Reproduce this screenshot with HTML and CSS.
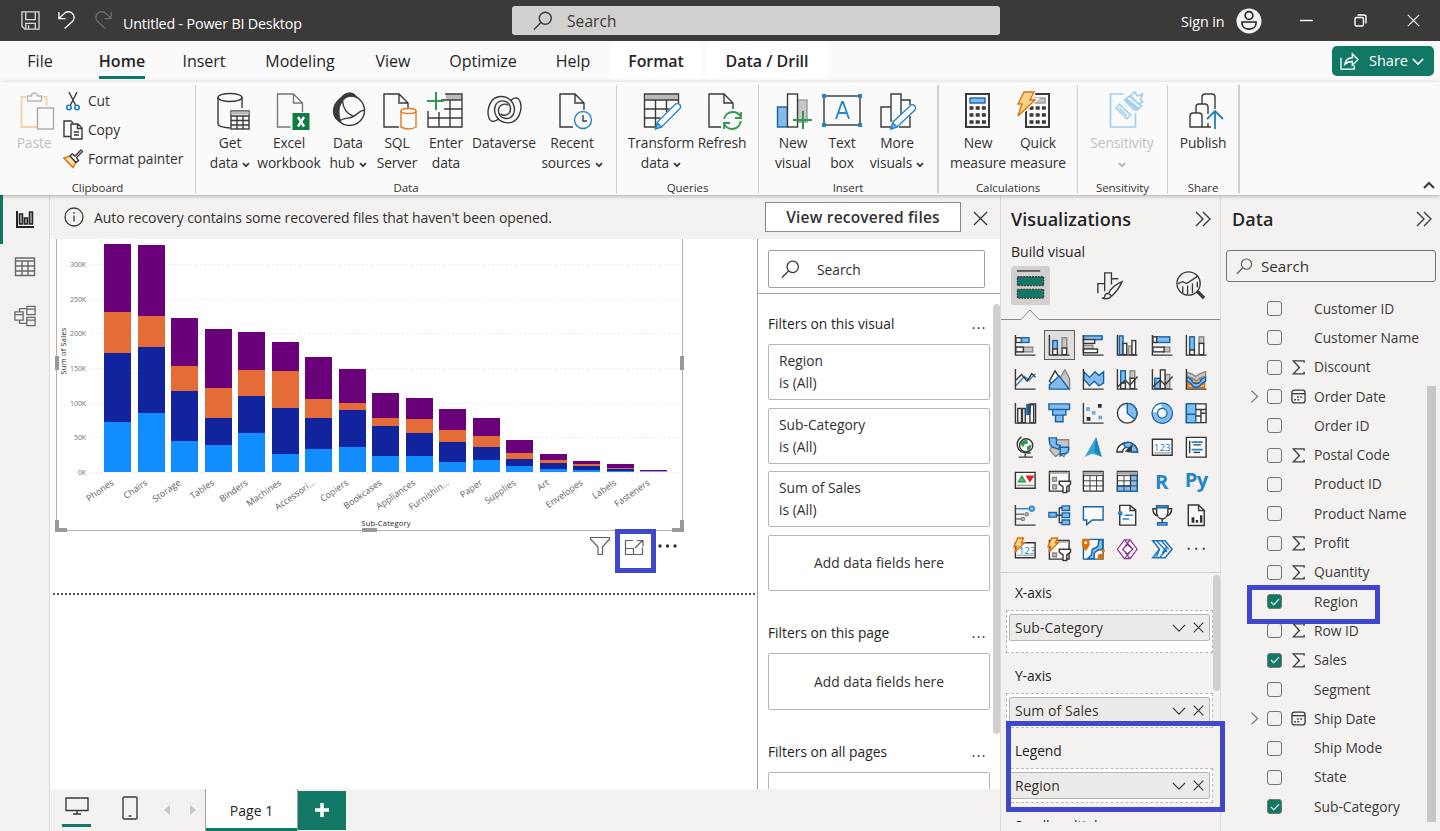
FILE: index.html
```html
<!DOCTYPE html>
<html lang="en">
<head>
<meta charset="utf-8">
<title>Untitled - Power BI Desktop</title>
<link rel="stylesheet" href="styles.css">
</head>
<body>
<svg class="defs" width="0" height="0">
  <symbol id="search" viewBox="0 0 20 20"><circle cx="12.3" cy="7.2" r="6"/><path d="M8 11.5L1 18.5"/></symbol>
  <symbol id="caret" viewBox="0 0 8 6"><path d="M1 1.2L4 4.2L7 1.2"/></symbol>
  <symbol id="sigma" viewBox="0 0 14 16"><path d="M13 3V1H1.5L8 8L1.5 14.8H13V12.6"/></symbol>
  <symbol id="cal" viewBox="0 0 16 16"><rect x="1" y="1.2" width="14" height="13.6" rx="2.5"/><path d="M1 5h14"/><path stroke-dasharray="1.8 1.6" d="M6.5 8.500h6M3.500 11.500h6" stroke-width="1.6"/></symbol>
  <symbol id="next" viewBox="0 0 10 16"><path d="M1.500 1.500L8.500 8L1.500 14.500"/></symbol>
  <symbol id="collapse" viewBox="0 0 16 16"><path d="M1 1L8 8L1 15M8 1L15 8L8 15"/></symbol>
  <symbol id="x" viewBox="0 0 16 16"><path d="M1 1L15 15M15 1L1 15"/></symbol>
  <symbol id="down" viewBox="0 0 16 9"><path d="M1 1L8 8L15 1"/></symbol>
</svg>

<header class="titlebar">
  <svg class="t-save" viewBox="0 0 20 20"><path d="M1 1h18v18H4l-3-3zM5 1v8h10V1M5 19v-6h10v6M8 15v4"/></svg>
  <svg class="t-undo" viewBox="0 0 20 20"><path d="M2 1v7h7M2 8L7.500 2.800a6 6 0 0 1 9 8L8 18.500"/></svg>
  <svg class="t-redo" viewBox="0 0 20 20"><path d="M18 1v7h-7M18 8L12.500 2.800a6 6 0 0 0-9 8L12 18.500"/></svg>
  <span class="doc-title">Untitled - Power BI Desktop</span>
  <div class="global-search"><svg><use href="#search"/></svg><span>Search</span></div>
  <span class="signin">Sign in</span>
  <svg class="avatar" viewBox="0 0 26 26"><circle cx="13" cy="13" r="12.500" fill="#f3f2f1" stroke="none"/><circle cx="13" cy="7.500" r="3.900"/><path d="M6 14h14v1.500c0 7.500-14 7.500-14 0z"/></svg>
  <svg class="win-min" viewBox="0 0 13 13"><path d="M0 6.500h13"/></svg>
  <svg class="win-max" viewBox="0 0 13 13"><rect x="1" y="3.500" width="8.500" height="8.500" rx="1.500"/><path d="M3.500 1h6.500q2 0 2 2v6.500"/></svg>
  <svg class="win-close" viewBox="0 0 16 16"><use href="#x"/></svg>
</header>

<nav class="tabs">
  <span class="tab file">File</span><span class="tab home"><b>Home</b></span><span class="tab insert">Insert</span><span class="tab modeling">Modeling</span><span class="tab view">View</span><span class="tab optimize">Optimize</span><span class="tab help">Help</span>
  <span class="tab ctx format">Format</span><span class="tab ctx drill">Data / Drill</span>
  <span class="share"><svg class="share-i" viewBox="0 0 20 18"><path d="M1 5v12h14v-4M5 12c1-5 4-7 8-7V1l6 6-6 6V9C9 9 7 10 5 12z"/></svg>Share<svg class="share-c" viewBox="0 0 16 9"><use href="#down"/></svg></span>
</nav>

<section class="ribbon">
  <div class="group g-clip">
    <div class="items">
      <div class="btn disabled w52"><svg viewBox="-3.500 0 36 38"><path d="M7 5H2v30h16M23 5h4v9" stroke="#f5d3a8" stroke-width="2"/><path d="M8 9V4h4q0-3 3-3t3 3h4v5z" stroke="#b8b8b8"/><rect x="18" y="16" width="16" height="21" stroke="#a8a8a8" stroke-width="1.400"/></svg><span>Paste</span></div>
      <div class="rows">
        <div><svg viewBox="0 0 20 20"><path d="M6 1l6.500 13M14 1L7.500 14"/><g stroke="#1a7dc4" stroke-width="1.600"><circle cx="6" cy="16.500" r="2.200"/><circle cx="14" cy="16.500" r="2.200"/></g></svg><span>Cut</span></div>
        <div><svg viewBox="0 0 20 20"><path d="M8 16.500H1V1h7l2 2M8 4h7l4 4v11H8zM14.500 4v4.500H19M11 12h5M11 15h5"/></svg><span>Copy</span></div>
        <div><svg viewBox="0 0 20 20"><path d="M1 9l6-2 6 6-3 5.500z" stroke="#d9730d" fill="#fde0a8" stroke-width="1.500"/><path d="M7 7l2-2 3 2 6-6 1.500 1.500-6 6 2 3-2.500 2z" fill="#fafafa"/></svg><span>Format painter</span></div>
      </div>
    </div>
    <div class="glabel">Clipboard</div>
  </div>

  <div class="group g-data">
    <div class="items">
      <div class="btn w56"><svg viewBox="-4 0 36 38"><path d="M2 5v27q0 3 12 4M26 5v11"/><ellipse cx="14" cy="5.500" rx="12" ry="4"/><rect x="15" y="19" width="18" height="18" fill="#fafafa"/><path d="M15 21h18" stroke="#bbb" stroke-width="3"/><path d="M15 24h18M15 28.500h18M15 33h18M21 24v13M27 24v13"/></svg><span>Get</span><span>data<svg class="car"><use href="#caret"/></svg></span></div>
      <div class="btn w62"><svg viewBox="-1.500 0 36 38"><path d="M18 35H5V2h16l9 9v9M21 2v9h9" stroke="#777"/><rect x="20" y="21" width="17" height="17" fill="#107c41" stroke="none"/><path d="M25.500 25l6 9.500M31.500 25l-6 9.500" stroke="#fff" stroke-width="2.400"/></svg><span>Excel</span><span>workbook</span></div>
      <div class="btn w56"><svg viewBox="0 0 36 38"><circle cx="19.500" cy="18.500" r="15"/><path d="M10 7C3 11-1 25 11 30.500 8 22 8 14 13 9z" fill="#3b3a39" stroke-width="1"/><path d="M10 7C15-1 24-1 27.500 6 22 3 16 4 12.500 9z" fill="#3b3a39" stroke-width="1"/><path d="M12.500 8.500C13 16 17 22 23.500 24.300M34.500 18.500C30 17 27 24 21 25.500 17 26.500 13 26 9.500 29"/></svg><span>Data</span><span>hub<svg class="car"><use href="#caret"/></svg></span></div>
      <div class="btn w42"><svg viewBox="-1 0 36 38"><path d="M19 35H4V2h15l9 9v5M19 2v9h9"/><g stroke="#e07a1a" fill="#fff"><path d="M21 19v16q8 4 15 0V19"/><ellipse cx="28.500" cy="19" rx="7.500" ry="2.500"/></g></svg><span>SQL</span><span>Server</span></div>
      <div class="btn w56"><svg viewBox="1 0 36 38"><path d="M19 5h16" stroke="#bbb" stroke-width="5"/><path d="M18 2h17v33H1V19M14 8h21M17 17h18M1 26h34M12 20v15M23 8v27"/><path d="M9 0v18M0 9h17" stroke="#2f9a4f" stroke-width="2"/></svg><span>Enter</span><span>data</span></div>
      <div class="btn w60"><svg viewBox="0 0 36 38"><g id="swirl"><path d="M13 26.500c-2 2-4 3-6 3C-1 29 0 4.500 15 4.500c11 0 16 11 12 18.500-4 6-14 4-14.500-4-.3-6 6-8.500 10-5.500"/></g><use href="#swirl" transform="rotate(180 18.500 17.700)"/></svg><span>Dataverse</span></div>
      <div class="btn w76"><svg viewBox="-1 0 36 38"><path d="M18 35H5V2h15l9 9v7M20 2v9h9"/><circle cx="28" cy="28" r="8.500" stroke="#2585c9"/><path d="M28 23v6h4"/></svg><span>Recent</span><span>sources<svg class="car"><use href="#caret"/></svg></span></div>
    </div>
    <div class="glabel">Data</div>
  </div>

  <div class="group g-query">
    <div class="items">
      <div class="btn w70"><svg viewBox="-.5 0 36 38"><path d="M2 5h32" stroke="#bbb" stroke-width="5"/><path d="M13 35H1V2h34v10M1 8h34M1 17h25M1 26h16M12 8v27M23 8v12"/><path d="M12 37l2-7 18-18q3-1 4.500 1t-.5 4L18 35z" stroke="#2585c9" fill="#fff"/><path d="M12 37l2-6 4 4z" fill="#83bceb" stroke="#2585c9"/></svg><span>Transform</span><span>data<svg class="car"><use href="#caret"/></svg></span></div>
      <div class="btn w52b"><svg viewBox="-1 0 36 38"><path d="M16 35H4V2h15l9 9v6M19 2v9h9"/><path d="M19 27q2-7 9-7 5 0 8 5M36 20v6h-6M36 29q-2 8-9 8-5 0-8-5M19 37v-6h6" stroke="#2f9a4f" stroke-width="1.800"/></svg><span>Refresh</span></div>
    </div>
    <div class="glabel">Queries</div>
  </div>

  <div class="group g-insert">
    <div class="items">
      <div class="btn w46"><svg viewBox="0 0 36 38"><rect x="2.500" y="15" width="10" height="20" fill="#83bceb" stroke="#1664a8"/><rect x="22" y="8" width="10" height="22" fill="#c8c6c4" stroke="#999"/><rect x="12.500" y="2" width="10" height="33" fill="#fff"/><path d="M28 19v18M18 28h19" stroke="#2f9a4f" stroke-width="2"/></svg><span>New</span><span>visual</span></div>
      <div class="btn w52b"><svg viewBox="0 0 36 38"><rect x="0" y="4" width="36" height="29"/><g fill="#2585c9" stroke="none"><path d="M-2 2h4v4h-4zM34 2h4v4h-4zM-2 31h4v4h-4zM34 31h4v4h-4z"/></g><path d="M12 27l6-17h1l6 17M14 21h9" stroke="#2585c9" stroke-width="1.800"/></svg><span>Text</span><span>box</span></div>
      <div class="btn w58"><svg viewBox="0 0 36 38"><path d="M13 35H2V15h10M12 30V2h10v21M22 8h9v5M20 35h11V24"/><path d="M12 37l2-7 18-17q3-1 4 1t0 4L18 35z" stroke="#2585c9" fill="#fff"/><path d="M12 37l2-6 4 4z" fill="#83bceb" stroke="#2585c9"/></svg><span>More</span><span>visuals<svg class="car"><use href="#caret"/></svg></span></div>
    </div>
    <div class="glabel">Insert</div>
  </div>

  <div class="group g-calc">
    <div class="items">
      <div class="btn w60"><svg viewBox="0 0 36 38"><rect x="6" y="2" width="23" height="33" stroke-width="2"/><rect x="10" y="6" width="15" height="5" fill="#83bceb" stroke="#1664a8"/><path d="M9.500 16h17M9.500 23h17M9.500 30h17" stroke-dasharray="4 2.200" stroke-width="3.600"/></svg><span>New</span><span>measure</span></div>
      <div class="btn w60"><svg viewBox="0 0 36 38"><rect x="6" y="2" width="23" height="33" stroke-width="2"/><rect x="10" y="6" width="15" height="5" fill="#c8c6c4" stroke="#999"/><path d="M9.500 16h17M9.500 23h17M9.500 30h17" stroke-dasharray="4 2.200" stroke-width="3.600"/><path d="M4 0h10l-4 8h5L-2 24l4-12h-4z" fill="#fbd38a" stroke="#fafafa" stroke-width="4"/><path d="M4 0h10l-4 8h5L-2 24l4-12h-4z" fill="#fbd38a" stroke="#d9730d"/></svg><span>Quick</span><span>measure</span></div>
    </div>
    <div class="glabel">Calculations</div>
  </div>

  <div class="group g-sens">
    <div class="items"><div class="btn disabled w88"><svg viewBox="-1.500 0 36 38"><g stroke="#a3cfec" stroke-width="1.700"><path d="M18 2H5v33h25V21"/><path d="M10.500 16l3.500-3.500 11 10.500-3.500 3.500zM13.500 16l8 7.500"/><path d="M19 8l5-4 12 10-4 4h-3z" fill="#fafafa"/><path d="M20.500 7.500l12 9.500" stroke-width="3.500"/><path d="M25 4l4-4 3 4 5-2-2 5 2 3-4 2z" fill="#fafafa"/></g></svg><span>Sensitivity</span><span><svg class="car solo"><use href="#caret"/></svg></span></div></div>
    <div class="glabel">Sensitivity</div>
  </div>
  <div class="group g-share">
    <div class="items"><div class="btn w70"><svg viewBox="-4 0 36 38"><path d="M22 35H1V24q0-3 3-3h6q3 0 3 3v11M7 21v-6q0-3 3-3h6q3 0 3 3v7M19 31v4M13 12V5q0-3 3-3h7q3 0 3 3v12"/><path d="M26 37V19M18 27l8-8 8 8" stroke="#2080b8" stroke-width="1.800"/></svg><span>Publish</span></div></div>
    <div class="glabel">Share</div>
  </div>
  <svg class="ribbon-up" viewBox="0 0 12 8"><path d="M1 7L6 2L11 7"/></svg>
</section>

<main class="body">
  <aside class="rail">
    <div class="rail-item on"><svg viewBox="0 0 22 22"><path d="M3 2v16h17" stroke-width="2"/><path d="M5.500 5h3v10h-3zM10.500 9h3v6h-3zM15.500 3h3v12h-3z" fill="#aaa" stroke-width="1.500"/></svg></div>
    <div class="rail-item tbl"><svg viewBox="0 0 22 22"><path d="M1.500 2h19v17.500h-19zM1.500 5h19M1.500 10h19M1.500 15h19M8 5v14M14 5v14"/></svg></div>
    <div class="rail-item mdl"><svg viewBox="0 0 24 24"><path d="M1 7.500h9v9H1zM1 10.500h9M14 1.500h9v9h-9zM14 4.500h9M14 13.500h9v9h-9zM14 16.500h9M6 7.500V4h8M6 16.500V20h8"/></svg></div>
  </aside>

  <section class="center">
    <div class="notice">
      <svg class="info" viewBox="0 0 20 20"><circle cx="10" cy="10" r="9"/><path d="M10 8.500v6M10 5v1.800"/></svg>
      <span>Auto recovery contains some recovered files that haven't been opened.</span>
      <button>View recovered files</button>
      <svg class="close"><use href="#x"/></svg>
    </div>
    <div class="workspace">
      <div class="canvas">
        <svg class="chart" viewBox="50 239 707 550">
          <g class="grid"><path d="M92 264.500H680M92 299.500H680M92 333.500H680M92 368.500H680M92 403.500H680M92 437.500H680M92 472.500H680"/></g>
          <g class="ticks"><text x="86" y="267">300K</text><text x="86" y="302">250K</text><text x="86" y="336">200K</text><text x="86" y="371">150K</text><text x="86" y="405.500">100K</text><text x="86" y="440">50K</text><text x="86" y="475">0K</text></g>
          <g class="bars">
            <path stroke="#6b007b" d="M117.700 244V472M151.200 245V472M184.700 317.500V472M218.200 329V472M251.700 331.500V472M285.200 341.500V472M318.700 356.500V472M352.200 369V472M385.700 393V472M419.200 398V472M452.700 409V472M486.200 418V472M519.700 440V472M553.200 453.500V472M586.700 461V472M620.200 463.500V472M653.700 470V472"/>
            <path stroke="#e66c37" d="M117.700 312V472M151.200 315.500V472M184.700 366V472M218.200 387.500V472M251.700 370V472M285.200 370.500V472M318.700 398.500V472M352.200 403V472M385.700 417.500V472M419.200 418.500V472M452.700 429.500V472M486.200 436V472M519.700 452.500V472M553.200 460V472M586.700 464V472M620.200 467.500V472"/>
            <path stroke="#12239e" d="M117.700 352.500V472M151.200 347V472M184.700 391V472M218.200 418V472M251.700 396V472M285.200 408V472M318.700 418V472M352.200 410V472M385.700 425.500V472M419.200 432.500V472M452.700 442V472M486.200 446.500V472M519.700 458.500V472M553.200 463V472M586.700 466V472M620.200 469V472"/>
            <path stroke="#118dff" d="M117.700 422V472M151.200 413V472M184.700 440.500V472M218.200 445V472M251.700 433V472M285.200 454V472M318.700 449V472M352.200 446.500V472M385.700 455.500V472M419.200 456V472M452.700 461.500V472M486.200 460V472M519.700 466V472M553.200 468.500V472M586.700 469.500V472M620.200 470.500V472"/>
            <path stroke="#8f9fe8" d="M653.700 471V472"/>
          </g>
          <g class="cats">
            <text transform="translate(114.500 484) rotate(-35)">Phones</text><text transform="translate(148 484) rotate(-35)">Chairs</text><text transform="translate(181.500 484) rotate(-35)">Storage</text><text transform="translate(215 484) rotate(-35)">Tables</text><text transform="translate(248.500 484) rotate(-35)">Binders</text><text transform="translate(282 484) rotate(-35)">Machines</text><text transform="translate(315.500 484) rotate(-35)">Accessori...</text><text transform="translate(349 484) rotate(-35)">Copiers</text><text transform="translate(382.500 484) rotate(-35)">Bookcases</text><text transform="translate(416 484) rotate(-35)">Appliances</text><text transform="translate(449.500 484) rotate(-35)">Furnishin...</text><text transform="translate(483 484) rotate(-35)">Paper</text><text transform="translate(516.500 484) rotate(-35)">Supplies</text><text transform="translate(550 484) rotate(-35)">Art</text><text transform="translate(583.500 484) rotate(-35)">Envelopes</text><text transform="translate(617 484) rotate(-35)">Labels</text><text transform="translate(650.500 484) rotate(-35)">Fasteners</text>
          </g>
          <g class="titles"><text x="386" y="526">Sub-Category</text><text transform="translate(66 351) rotate(-90)">Sum of Sales</text></g>
          <path class="frame" d="M56.500 239V530.500H682.500V239"/>
          <g fill="#999" stroke="none"><path d="M55 356h4v14h-4zM680 356h4v14h-4zM362 528h15v4h-15zM55 520h4v8h8v4H55zM680 520h4v12H672v-4h8z"/></g>
          <g class="vicons"><path d="M590.500 537.500h19v1.500l-7 8v7.500h-4.500V547l-7.500-8z"/><path d="M633 540.500h-7.500v14h17v-7M625.500 548.500h8v6M635 548l7.500-7.500M637 540.500h6v6"/></g>
          <g fill="#333" stroke="none"><circle cx="660" cy="546" r="1.700"/><circle cx="667.500" cy="546" r="1.700"/><circle cx="675" cy="546" r="1.700"/></g>
          <path class="page-edge" d="M53 594H757"/>
        </svg>
      </div>
      <div class="filters">
        <div class="filter-search"><svg><use href="#search"/></svg><span>Search</span></div>
        <div class="filter-list">
          <h4>Filters on this visual<i>...</i></h4>
          <div class="card"><span>Region</span><span>is (All)</span></div>
          <div class="card"><span>Sub-Category</span><span>is (All)</span></div>
          <div class="card"><span>Sum of Sales</span><span>is (All)</span></div>
          <div class="card add">Add data fields here</div>
          <h4 class="second">Filters on this page<i>...</i></h4>
          <div class="card add">Add data fields here</div>
          <h4 class="third">Filters on all pages<i>...</i></h4>
          <div class="card add"></div>
          <div class="thumb"></div>
        </div>
      </div>
    </div>
    <footer class="pages">
      <div class="desk"><svg viewBox="0 0 24 20"><path d="M1 2h22v12.500H1zM12 14.500V18M8 18h8"/></svg></div>
      <svg class="phone" viewBox="0 0 16 24"><rect x="1" y="1" width="14" height="22" rx="1"/><path d="M6.500 20h3"/></svg>
      <svg class="arrow" viewBox="0 0 6 10"><path d="M6 0v10L0 5z"/></svg>
      <svg class="arrow r" viewBox="0 0 6 10"><path d="M0 0v10l6-5z"/></svg>
      <div class="page-tab">Page 1</div>
      <div class="page-add"><svg viewBox="0 0 14 14"><path d="M7 0v14M0 7h14"/></svg></div>
    </footer>
  </section>

  <aside class="viz">
    <div class="pane-head"><h2>Visualizations</h2><svg><use href="#collapse"/></svg></div>
    <h3>Build visual</h3>
    <div class="modes">
      <div class="mode on"><svg viewBox="0 0 32 32"><path d="M2 2h24" stroke-width="1.500"/><rect x="2.500" y="8" width="27" height="9" fill="#117865" stroke-dasharray="2 1"/><rect x="2.500" y="21" width="27" height="9" fill="#117865" stroke-dasharray="2 1"/></svg></div>
      <div class="mode"><svg viewBox="0 0 32 32"><path d="M3 24V14h7M10 22V3h7v12M17 9h7M28 12q-10 4-14 12l3 3q7-6 11-15zM14 24q-4 0-4 4-1 1-3 1 7 2 10-2"/></svg></div>
      <div class="mode"><svg viewBox="0 0 32 32"><circle cx="14" cy="14" r="12"/><path d="M3 14l5-2 4 2 12-8M8 17v7M13 16v9M18 14v10M23 12v6"/><path d="M23 22l7 7" stroke-width="3.500"/></svg></div>
    </div>
    <svg class="notch" viewBox="0 0 219 12"><path d="M0 11.500H20L29 2L38 11.500H219"/></svg>
    <div class="gallery">
      <svg viewBox="0 0 24 24"><rect class="g" x="2" y="14" width="18" height="5"/><rect class="w" x="2" y="14" width="8" height="5"/><rect class="w" x="2" y="4" width="6" height="5"/><rect class="b" x="8" y="4" width="8" height="5"/><path d="M1.500 1v21.500H23"/></svg>
      <svg class="sel" viewBox="0 0 24 24"><rect class="b" x="5" y="7" width="5" height="9"/><rect class="w" x="5" y="16" width="5" height="6"/><rect class="g" x="15" y="4" width="5" height="11"/><rect class="w" x="15" y="15" width="5" height="7"/><path d="M1.500 1v21.500H23"/></svg>
      <svg viewBox="0 0 24 24"><rect class="b" x="1.500" y="2" width="20" height="4"/><rect class="w" x="1.500" y="6" width="12" height="4"/><rect class="g" x="1.500" y="12" width="10" height="4"/><rect class="w" x="1.500" y="16" width="15" height="4"/><path d="M1.500 1v21.500H23"/></svg>
      <svg viewBox="0 0 24 24"><rect class="b" x="3.500" y="2" width="4" height="20"/><rect class="w" x="7.500" y="10" width="4" height="12"/><rect class="g" x="13" y="13" width="4" height="9"/><rect class="w" x="17" y="7" width="4" height="15"/><path d="M1.500 1v21.500H23"/></svg>
      <svg viewBox="0 0 24 24"><rect class="b" x="5" y="3" width="15" height="6"/><rect class="w" x="2" y="3" width="4" height="6"/><rect class="g" x="13" y="14" width="7" height="5"/><rect class="w" x="2" y="14" width="12" height="5"/><path d="M1.500 1v21.500H23"/></svg>
      <svg viewBox="0 0 24 24"><rect class="b" x="5" y="3" width="5" height="14"/><rect class="w" x="5" y="17" width="5" height="5"/><rect class="g" x="15" y="3" width="5" height="7"/><rect class="w" x="15" y="10" width="5" height="12"/><path d="M1.500 1v21.500H23"/></svg>

      <svg viewBox="0 0 24 24"><path d="M2 19l9-10 5 4 7-7" stroke="#2585c9"/><path d="M2 13l6-6 6 7 5-8 4 4M1.500 1v21.500H23"/></svg>
      <svg viewBox="0 0 24 24"><path class="g" d="M12 12l6-10 5 9v11H12z"/><path class="w" d="M1.500 14l6-11 7 11-5 8z"/><path class="b" d="M1.500 22.500V18L12 8.500l10.500 14z"/></svg>
      <svg viewBox="0 0 24 24"><path class="b" d="M2 4l6 6 6-6 4 4 5-4v12l-5 3-5-5-5 5-6-7z"/><path d="M1.500 1v21.500H23"/></svg>
      <svg viewBox="0 0 24 24"><rect class="b" x="5" y="3" width="5" height="13"/><rect class="w" x="5" y="16" width="5" height="6"/><rect class="g" x="15" y="3" width="5" height="8"/><rect class="w" x="15" y="11" width="5" height="11"/><path d="M1.500 1v21.500H23M2 20l8-7 5 5 8-9"/></svg>
      <svg viewBox="0 0 24 24"><rect class="b" x="4" y="11" width="6" height="11"/><rect class="g" x="15" y="7" width="5" height="15"/><rect class="w" x="10" y="2" width="5" height="20"/><path d="M1.500 1v21.500H23M2 20l8-7 5 5 8-9"/></svg>
      <svg viewBox="0 0 24 24"><path d="M3 12h18v4H3zM3 17h18v4H3z" fill="#f5b070" stroke="#d9730d"/><path class="g" d="M2 5q5 0 9 4 6-4 11-5v5q-5 0-10 5-4-4-10-5z"/><path class="b" d="M2 10q5 1 6 5 4 3 8 0 1-4 6-5v4q-4 2-6 5-4 3-8 0-2-4-6-5z"/><path d="M1.500 1v21.500H23"/></svg>

      <svg viewBox="0 0 24 24"><path class="w" d="M4 7h5v15H4zM8 7h4v15H8zM17 3h4v19h-4z"/><rect x="13" y="2" width="4" height="12" fill="#1664a8" stroke="none"/><path d="M1.500 1v21.500H23V2h-6v11"/></svg>
      <svg viewBox="0 0 24 24"><path class="b" d="M1 2h22v6H1zM5 8h14v6H5zM8 14h8v7H8z"/></svg>
      <svg viewBox="0 0 24 24"><path d="M1.500 1v21.500H23"/><path fill="#83bceb" stroke="#2585c9" stroke-width=".6" d="M5 6h3v3H5zM11 10h3v3h-3zM18 15h3v3h-3z"/><path fill="#333" d="M17 2h4v4h-4zM5 16h4v4H5z" stroke="none"/></svg>
      <svg viewBox="0 0 24 24"><circle class="w" cx="12" cy="12" r="10.500" stroke="#333"/><path class="b" d="M12 12V1.500a10.500 10.500 0 0 1 8 17z"/></svg>
      <svg viewBox="0 0 24 24"><circle cx="12" cy="12" r="8" stroke="#1664a8" stroke-width="7"/><circle cx="12" cy="12" r="8" stroke="#83bceb" stroke-width="4.500"/><path d="M4 11q1-6 7-7" stroke="#fff" stroke-width="4"/></svg>
      <svg viewBox="0 0 24 24"><path class="w" d="M1.500 2h21v20h-21z" stroke="#333"/><path class="b" d="M1.500 2h10v20h-10zM1.500 13h10"/><path d="M11.500 8h11M17 8v14M11.500 15h5.500M17 12h5"/></svg>

      <svg viewBox="0 0 24 24"><circle cx="13" cy="10" r="7" fill="#fff"/><path d="M8 5l6-1 1 4-4 1-1 3-3-3zM14 11l5-2-2 6-3 1z" fill="#2f9a4f" stroke="none"/><path d="M8 1q-6 4-4 11t14 6M12 19v3M5 22.500h15"/></svg>
      <svg viewBox="0 0 24 24"><path class="g" d="M9 4h13v9l-5 9-5-3-4 3-6-7 3-7z"/><path class="b" d="M1 2h8v7l4 1-2 4-6-2-3-3zM13 12h9q1 6-4 7h-3l-2 2z"/></svg>
      <svg viewBox="0 0 24 24"><path d="M15 1L3 22l8-3 10 3z" fill="#38a3d5" stroke="none"/><path d="M15 1l6 21-8-5z" fill="#1b86bd" stroke="none"/></svg>
      <svg viewBox="0 0 24 24"><path class="w" d="M1 17a11 10 0 0 1 22 0h-6a5 5 0 0 0-10 0z" stroke="#333"/><path class="b" d="M8 8.500C14 4 22 9 23 17h-6q-1-5-7-5z"/><path d="M11 16l6-6-2 7z" fill="#333"/></svg>
      <svg viewBox="0 0 24 24"><path class="w" d="M1.500 3.500h21v17h-21z" stroke="#333"/><path d="M3 18h18" stroke="#aaa"/><text x="12" y="15.500">123</text></svg>
      <svg viewBox="0 0 24 24"><path class="w" d="M1.500 1.500h21v21h-21z" stroke="#333"/><path d="M5 5v13M9 9.500h8M9 17.500h7"/><path d="M7 6.500h12M7 14.500h12" stroke="#2585c9" stroke-width="2"/></svg>

      <svg viewBox="0 0 24 24"><path class="w" d="M1.500 2.500h21v17h-21z" stroke="#333"/><path d="M5 12.500l3.500-6 3.500 6z" fill="#6fbf73" stroke="#2f9a4f"/><path d="M13.500 6.500h7l-3.500 5.500z" fill="#d22" stroke="#d22"/><path d="M3 16.500h18" stroke="#999"/></svg>
      <svg viewBox="0 0 24 24"><path class="w" d="M1.500 1.500h21v21h-21z" stroke="#333"/><path d="M1.500 3h21" stroke="#aaa" stroke-width="2"/><path class="g" d="M5 8h4v4H5zM5 16h4v4H5z"/><path d="M12 12h12v3l-4 3v6h-4v-6l-4-3z" fill="#fff"/></svg>
      <svg viewBox="0 0 24 24"><path class="w" d="M1.500 1.500h21v21h-21z" stroke="#333"/><path d="M1.500 3.500h21" stroke="#aaa" stroke-width="3"/><path d="M1.500 6h21M1.500 11.500h21M1.500 17h21M8.500 6v16M15.500 6v16" stroke-width="1"/></svg>
      <svg viewBox="0 0 24 24"><path class="w" d="M1.500 1.500h21v21h-21z" stroke="#333"/><path class="b" d="M15.500 5h7v17.500h-21V17h14z"/><path d="M1.500 3.500h21" stroke="#aaa" stroke-width="3"/><path d="M1.500 6h21M1.500 11.500h21M1.500 17h21M8.500 6v16M15.500 6v16" stroke-width="1"/></svg>
      <svg viewBox="0 0 24 24"><text class="big" x="11" y="20">R</text></svg>
      <svg viewBox="0 0 24 24"><text class="big" x="12" y="18">Py</text></svg>

      <svg viewBox="0 0 24 24"><path d="M1.500 1v21.500H23"/><path d="M2 5h16" stroke="#2585c9"/><circle cx="19" cy="5" r="2.600" fill="#83bceb" stroke="#2585c9"/><path d="M2 11h9M2 16h6" stroke="#777"/><circle cx="13.500" cy="11" r="1.700" class="g"/><circle cx="9.500" cy="16" r="1.700" class="g"/></svg>
      <svg viewBox="0 0 24 24"><path d="M8 12h7M12 4v16M12 4h3M12 20h3"/><path class="b" d="M1 9h8v5H1zM15 2h8v5h-8zM15 9.500h8v5h-8zM15 17h8v5h-8z"/></svg>
      <svg viewBox="0 0 24 24"><path class="w" stroke="#1664a8" d="M1.500 3h21v14H11l-6 5v-5H1.500z"/></svg>
      <svg viewBox="0 0 24 24"><path class="w" d="M4 1.500h11l6 5v16H4z" stroke="#333"/><path d="M15 1.500v5.500h6"/><path d="M9 12h9M7 16h7" stroke="#2585c9"/><circle cx="4.500" cy="10" r="2.500" fill="#2585c9" stroke="none"/></svg>
      <svg viewBox="0 0 24 24"><path class="w" d="M6 2h12v8q-2 6-6 6t-6-6zM6 5H2q0 7 6 8M18 5h4q0 7-6 8M12 16v4" stroke="#333"/><path class="b" d="M6 2h12v2H6zM7 20h10v2.500H7z"/></svg>
      <svg viewBox="0 0 24 24"><path class="w" d="M3.500 1h11l6 6v16h-17z" stroke="#333"/><path d="M14.500 1v6h6"/><path d="M7 14h3v6H7zM11.500 17h2.500v3h-2.500zM16 12h2.500v8H16z" fill="#333" stroke="none"/></svg>

      <svg viewBox="0 0 24 24"><path class="w" d="M1.500 5h21v16h-21z" stroke="#333"/><text x="14" y="17">123</text><path d="M3 18.500h18" stroke="#aaa"/><path d="M4 0h6L8 5h3L1 15l2-6H0z" fill="#fbd38a" stroke="#d9730d"/></svg>
      <svg viewBox="0 0 24 24"><path class="w" d="M1.500 2.500h21v20h-21z" stroke="#333"/><path d="M10 4h12" stroke="#aaa" stroke-width="2"/><path class="g" d="M5 16h4v4H5z"/><path d="M12 12h12v3l-4 3v6h-4v-6l-4-3z" fill="#fff"/><path d="M4 0h6L8 5h3L1 15l2-6H0z" fill="#fbd38a" stroke="#d9730d"/></svg>
      <svg viewBox="0 0 24 24"><path class="w" d="M1.500 1.500h21v21h-21z" stroke="#1664a8"/><path class="b" d="M22 2v10l-5 1-4 3v6H6l4-4 1-6 6-3 1-7z"/><path d="M0 1h8v7l-4 6-4-6z" fill="#e07000" stroke="none"/><circle cx="4" cy="5" r="1.600" fill="#fff" stroke="none"/><circle cx="20" cy="20" r="3.300" fill="#e07000" stroke="none"/><circle cx="22.500" cy="13.500" r="1.800" fill="#e07000" stroke="none"/></svg>
      <svg viewBox="0 0 24 24"><path stroke="#8b2f97" fill="#fff" d="M1.500 12L9 2h6l7.500 10L15 22H9z" stroke-width="1.300"/><path stroke="#8b2f97" stroke-width="1.300" d="M9 2l9 10-6 5-5-5 5-5 6 5M15 2L9.500 9M9 22l6-7M15 22l-5.500-7"/></svg>
      <svg viewBox="0 0 24 24"><path stroke="#1976c5" fill="#fff" stroke-width="1.700" d="M2 3h13l7.500 9-7.500 9H2l7-9z"/><path stroke="#1976c5" stroke-width="1.500" d="M6 3l11 12M11 3l8 9M17 12L9 21M9 12l-3 8M12 16l5-7"/></svg>
      <svg viewBox="0 0 24 24"><path d="M3 11.500h2M11 11.500h2M19 11.500h2" stroke-width="2"/></svg>
    </div>
    <div class="wells">
      <h5>X-axis</h5>
      <div class="well first"><div class="pill">Sub-Category<svg class="dn"><use href="#down"/></svg><svg class="cx"><use href="#x"/></svg></div></div>
      <h5 class="y">Y-axis</h5>
      <div class="well"><div class="pill">Sum of Sales<svg class="dn"><use href="#down"/></svg><svg class="cx"><use href="#x"/></svg></div></div>
      <h5 class="l">Legend</h5>
      <div class="well"><div class="pill">Region<svg class="dn"><use href="#down"/></svg><svg class="cx"><use href="#x"/></svg></div></div>
      <h5 class="s">Small multiples</h5>
      <div class="thumb"></div>
    </div>
  </aside>

  <aside class="data">
    <div class="pane-head"><h2>Data</h2><svg><use href="#collapse"/></svg></div>
    <div class="data-search"><svg><use href="#search"/></svg><span>Search</span></div>
    <ul class="fields">
      <li><em></em><i></i><b></b>Customer ID</li>
      <li><em></em><i></i><b></b>Customer Name</li>
      <li><em></em><i></i><b><svg><use href="#sigma"/></svg></b>Discount</li>
      <li><em><svg><use href="#next"/></svg></em><i></i><b><svg><use href="#cal"/></svg></b>Order Date</li>
      <li><em></em><i></i><b></b>Order ID</li>
      <li><em></em><i></i><b><svg><use href="#sigma"/></svg></b>Postal Code</li>
      <li><em></em><i></i><b></b>Product ID</li>
      <li><em></em><i></i><b></b>Product Name</li>
      <li><em></em><i></i><b><svg><use href="#sigma"/></svg></b>Profit</li>
      <li><em></em><i></i><b><svg><use href="#sigma"/></svg></b>Quantity</li>
      <li><em></em><i class="ck"><svg viewBox="0 0 12 10"><path d="M1 5l3.500 3.500L11 1.500"/></svg></i><b></b>Region</li>
      <li><em></em><i></i><b><svg><use href="#sigma"/></svg></b>Row ID</li>
      <li><em></em><i class="ck"><svg viewBox="0 0 12 10"><path d="M1 5l3.500 3.500L11 1.500"/></svg></i><b><svg><use href="#sigma"/></svg></b>Sales</li>
      <li><em></em><i></i><b></b>Segment</li>
      <li><em><svg><use href="#next"/></svg></em><i></i><b><svg><use href="#cal"/></svg></b>Ship Date</li>
      <li><em></em><i></i><b></b>Ship Mode</li>
      <li><em></em><i></i><b></b>State</li>
      <li><em></em><i class="ck"><svg viewBox="0 0 12 10"><path d="M1 5l3.500 3.500L11 1.500"/></svg></i><b></b>Sub-Category</li>
    </ul>
    <div class="thumb"></div>
  </aside>
</main>
<div class="mark mark-focus"></div>
<div class="mark mark-region"></div>
<div class="mark mark-legend"></div>
</body>
</html>
```
FILE: styles.css
```css
* { box-sizing: border-box; margin: 0; padding: 0; }
body { width: 1440px; height: 831px; overflow: hidden; position: relative; background: #f3f2f1; color: #323130; font: 14px/20px "Open Sans", "Noto Sans", sans-serif; }
svg { fill: none; stroke: #3b3a39; stroke-width: 1.4; flex: none; overflow: visible; }
.defs { position: absolute; }
h2, h3, h4, h5 { font-weight: 400; color: #252423; }

.titlebar { height: 41px; background: #3b3a39; color: #fff; display: flex; align-items: center; }
.titlebar svg { stroke: #fff; }
.titlebar .t-save { width: 19px; height: 19px; margin-left: 21px; stroke: #d8d8d8; }
.titlebar .t-undo { width: 19px; height: 19px; margin-left: 17px; }
.titlebar .t-redo { width: 19px; height: 19px; margin-left: 18px; stroke: #6e6d6c; }
.doc-title { margin-left: 10px; width: 389px; padding-top: 7px; white-space: nowrap; font-size: 14.300px; letter-spacing: -.17px; }
.titlebar .global-search { width: 488px; height: 29px; background: #d2d0ce; border-radius: 3px; color: #3b3a39; font-size: 15.500px; letter-spacing: .1px; display: flex; align-items: center; padding-left: 21px; }
.global-search svg { width: 20px; height: 20px; stroke: #3b3a39; margin-right: 14px; }
.titlebar .global-search svg { stroke: #3b3a39; }
.signin { width: 46px; margin-left: 181px; white-space: nowrap; font-size: 14.300px; letter-spacing: -.1px; padding-top: 2px; }
.titlebar .avatar { width: 26px; height: 26px; margin-left: 9px; stroke: #252423; stroke-width: 1.6; }
.win-min { width: 13px; height: 13px; margin-left: 38px; }
.win-max { width: 13px; height: 13px; margin-left: 41px; }
.win-close { width: 13px; height: 13px; margin-left: 40px; }

.tabs { height: 41px; background: #fafafa; display: flex; font-size: 16px; line-height: 22px; color: #252423; }
.tab { display: flex; justify-content: center; padding-top: 9px; height: 38px; letter-spacing: 0; }
.tab b { font-weight: 600; border-bottom: 3px solid #117865; height: 29px; letter-spacing: .05px; }
.file { width: 80px; } .home { width: 84px; } .insert { width: 80px; } .modeling { width: 112px; } .view { width: 74px; } .optimize { width: 106px; } .help { width: 74px; }
.ctx { background: #fff; font-weight: 600; letter-spacing: -.1px; }
.drill { letter-spacing: -.02px; }
.format { width: 92px; } .drill { width: 122px; margin-left: 4px; }
.share { margin: 5px 0 0 504px; width: 102px; height: 30px; background: #117865; border-radius: 5px; color: #fff; display: flex; align-items: center; font-size: 14.500px; padding-left: 8px; letter-spacing: 0; }
.share svg { stroke: #fff; }
.share .share-i { width: 19px; height: 17px; margin-right: 10px; }
.share .share-c { width: 12px; height: 7px; margin-left: 4px; stroke-width: 2; }

.ribbon { height: 113px; background: #fafafa; display: flex; position: relative; z-index: 2; box-shadow: 0 1px 4px rgba(0,0,0,.3); padding-top: 3px; }
.group { height: 108px; border-right: 1px solid #d0cfce; display: flex; flex-direction: column; }
.items { display: flex; height: 93px; }
.btn { display: flex; flex-direction: column; align-items: center; padding-top: 7px; font-size: 13.800px; letter-spacing: -.1px; white-space: nowrap; }
.btn > svg { width: 36px; height: 38px; margin-bottom: 3px; }
.btn span { height: 20px; }
.btn.disabled { color: #c2c0be; }
.car { width: 8px; height: 6px; margin-left: 4px; stroke-width: 1.8; }
.car.solo { margin: 0; stroke: #b3b0ad; }
.w42 { width: 42px; } .w46 { width: 46px; } .w52, .w52b { width: 52px; } .w56 { width: 56px; } .w58 { width: 58px; } .w60 { width: 60px; } .w62 { width: 62px; } .w70 { width: 70px; } .w76 { width: 76px; } .w88 { width: 88px; }
.glabel { text-align: center; font-size: 11.500px; line-height: 16px; letter-spacing: -.05px; margin-top: 2px; position: relative; top: 3px; }
.g-clip { width: 196px; } .g-clip .items { padding-left: 8px; }
.g-data { width: 421px; } .g-data .items { padding-left: 6px; }
.g-query { width: 142px; } .g-query .items { padding-left: 9px; }
.g-insert { width: 180px; border-right-width: 2px; } .g-insert .items { padding-left: 11px; }
.g-calc { width: 139px; } .g-calc .items { padding-left: 9px; }
.g-sens { width: 90px; }
.g-share { width: 72px; border-right-width: 2px; }
.rows { padding: 1px 0 0 3px; }
.rows div { display: flex; align-items: center; height: 29px; font-size: 13.800px; letter-spacing: -.08px; white-space: nowrap; }
.rows svg { width: 20px; height: 20px; margin-right: 5px; }
.ribbon-up { width: 12px; height: 8px; margin: 96px 0 0 183px; stroke-width: 2; }

.body { display: flex; height: 636px; }
.rail { width: 50px; border-right: 1px solid #dcdbda; }
.rail-item { height: 49px; display: flex; align-items: center; padding-left: 14px; }
.rail-item.on { border-left: 3px solid #117865; padding-left: 11px; }
.rail-item.tbl { height: 46px; }
.rail-item.mdl { height: 52px; }
.rail-item svg { width: 22px; height: 22px; stroke: #696867; }
.rail-item.on svg { stroke: #252423; }
.center { width: 951px; border-right: 1px solid #dcdbda; display: flex; flex-direction: column; }
.notice { height: 44px; display: flex; align-items: center; white-space: nowrap; font-size: 14px; letter-spacing: -.085px; }
.info { width: 20px; height: 20px; margin: 0 10px 0 14px; stroke-width: 1.3; }
.notice span { width: 671px; padding-top: 2px; }
.notice button { width: 196px; height: 30px; background: #fff; border: 1px solid #8a8886; font: 600 15.500px "Open Sans", sans-serif; color: #323130; letter-spacing: .2px; }
.close { width: 15px; height: 15px; margin: 2px 0 0 12px; }
.workspace { height: 550px; display: flex; background: #fff; overflow: hidden; }
.canvas { width: 707px; }
.chart { width: 707px; height: 550px; display: block; }
.chart text { stroke: none; fill: #666; font-family: "Open Sans", sans-serif; }
.grid path { stroke: #e3e3e3; stroke-width: 1; stroke-dasharray: 1.500 3; }
.chart .ticks text { font-size: 7.200px; text-anchor: end; fill: #777; letter-spacing: -.2px; }
.bars path { stroke-width: 27; shape-rendering: crispEdges; }
.chart .cats text { font-size: 9px; text-anchor: end; fill: #605e5c; }
.chart .titles text { font-size: 7.500px; letter-spacing: .2px; text-anchor: middle; fill: #252423; }
.frame { stroke: #b3b3b3; stroke-width: 1; }
.vicons path { stroke: #605e5c; stroke-width: 1.2; }
.page-edge { stroke: #555; stroke-width: 2; stroke-dasharray: 2 2; }

.filters { width: 243px; border-left: 1px solid #a3a1a0; font-size: 13.800px; }
.filter-search { height: 38px; width: 217px; margin: 11px 0 5px 10px; border: 1px solid #a19f9d; border-radius: 2px; display: flex; align-items: center; padding-left: 12px; }
.filter-search svg { width: 19px; height: 19px; margin-right: 17px; }
.filter-search span { padding-top: 1px; }
.filter-list { border-top: 1px solid #a3a1a0; padding: 20px 10px 0; position: relative; height: 496px; letter-spacing: 0; }
.filter-list h4 { font-size: 13.800px; display: flex; justify-content: space-between; padding-right: 3px; height: 30px; line-height: 20px; }
.filter-list h4 i { font-style: normal; letter-spacing: 1.500px; }
.filter-list h4.second { margin-top: 32px; }
.filter-list h4.third { margin-top: 32px; }
.card { height: 56px; width: 222px; border: 1px solid #b8b6b5; border-radius: 2px; padding: 5px 10px; display: flex; flex-direction: column; line-height: 22px; }
.card + .card { margin-top: 7.600px; }
.card.add { align-items: center; justify-content: center; padding-top: 6px; letter-spacing: .05px; }
.second + .card { height: 57px; }
.thumb { background: #d2d0ce; border-radius: 4px; position: absolute; width: 7px; }
.filter-list .thumb { right: 0; top: 10px; height: 430px; }

.pages { height: 42px; display: flex; align-items: center; }
.desk { width: 29px; height: 31px; margin: 2px 0 0 12px; border-bottom: 3px solid #117865; text-align: center; }
.desk svg { width: 24px; height: 20px; }
.phone { width: 16px; height: 24px; margin: -5px 26px 0 31px; }
.arrow { width: 6px; height: 10px; margin-right: 20px; }
.arrow path { fill: #c8c6c4; stroke: none; }
.arrow.r { margin-right: 9px; }
.page-tab { width: 93px; height: 42px; background: #fff; border: 1px solid #a3a1a0; border-width: 0 1px 0 1px; box-shadow: inset 0 -3px #117865; text-align: center; line-height: 43px; font-weight: 500; font-size: 14px; letter-spacing: 0; color: #252423; }
.page-add { width: 48px; height: 39px; background: #117865; display: grid; place-items: center; }
.page-add svg { width: 14px; height: 14px; stroke: #fff; stroke-width: 3.5; }

.viz { width: 219px; position: relative; }
.data { width: 220px; border-left: 1px solid #dcdbda; position: relative; }
.pane-head { display: flex; justify-content: space-between; padding: 12px 9px 0 10px; height: 45px; }
.pane-head h2 { font-size: 18px; font-weight: 600; line-height: 24px; letter-spacing: .05px; }
.pane-head svg { width: 16px; height: 16px; margin-top: 4px; }
.viz h3 { font-size: 14px; font-weight: 500; padding-left: 10px; height: 26px; line-height: 23px; }
.modes { display: flex; padding-left: 10px; gap: 41px; height: 39px; }
.mode { width: 39px; height: 39px; display: grid; place-items: center; border-radius: 3px; }
.mode.on { background: #d2d0ce; }
.mode svg { width: 31px; height: 31px; }
.mode.on svg { position: relative; top: -1px; }
.notch { width: 219px; height: 12px; display: block; margin-top: 3px; stroke: #8a8886; }
.notch path { stroke-width: 1; fill: none; }
.gallery { display: grid; grid-template-columns: repeat(6, 34.200px); grid-auto-rows: 34px; padding: 8px 0 0 7px; height: 252px; }
.gallery > svg { width: 22.500px; height: 22.500px; place-self: center; stroke-width: 1.5; }
.gallery .sel { background: #e1dfdd; box-shadow: 0 0 0 3px #e1dfdd, 0 0 0 4px #605e5c; }
.gallery .b { fill: #83bceb; stroke: #1664a8; }
.gallery .g { fill: #c8c6c4; stroke: #8a8886; }
.gallery .w { fill: #fafafa; }
.gallery text { stroke: none; fill: #2585c9; text-anchor: middle; font: 10.500px "Open Sans", sans-serif; }
.gallery .big { font: 700 21.500px "Open Sans", sans-serif; letter-spacing: -.6px; }
.wells { border-top: 1px solid #d2d0ce; height: 250px; overflow: hidden; position: relative; padding-top: 10px; font-size: 13.900px; letter-spacing: .1px; }
.wells h5 { font-size: 13.800px; line-height: 20px; height: 27px; padding-left: 14px; letter-spacing: -.1px; }
.wells h5.y { margin-top: 13px; } .wells h5.l { margin-top: 13px; } .wells h5.s { margin-top: 13px; }
.well { width: 207px; height: 35px; margin-left: 5px; border: 1px dashed #b8b6b5; background: #fff; padding: 3px; }
.well.first { height: 43px; }
.pill { height: 27px; width: 201px; margin-left: -1px; background: #edebe9; border: 1px solid #b8b6b5; border-radius: 2px; display: flex; align-items: center; padding: 0 5px; }
.pill .dn { width: 14px; height: 8px; margin: 0 7px 0 auto; }
.pill .cx { width: 11px; height: 11px; stroke-width: 1.7; }
.wells .thumb { right: 0; top: 2px; height: 116px; }

.data .pane-head { padding-left: 11px; padding-right: 8px; }
.data-search { width: 210px; height: 32px; margin: 10px 0 0 5px; border: 1px solid #777574; border-radius: 3px; display: flex; align-items: center; padding-left: 9px; font-size: 15.200px; }
.data-search svg { width: 17px; height: 17px; margin-right: 8px; stroke: #605e5c; }
.fields { list-style: none; padding: 12px 0 0 29px; color: #3b3a39; letter-spacing: -.03px; }
.fields li { height: 29.300px; display: flex; align-items: center; white-space: nowrap; font-size: 13.800px; }
.fields em { width: 17px; display: flex; }
.fields em svg { width: 9px; height: 15px; stroke: #777; }
.fields i { width: 15px; height: 15px; border: 1px solid #777574; border-radius: 3px; }
.fields .ck { background: #117865; display: grid; place-items: center; }
.ck svg { width: 10px; height: 8px; stroke: #fff; }
.fields b { width: 32px; display: flex; padding-left: 9px; }
.fields b svg { width: 15px; height: 15px; }
.data > .thumb { width: 9px; border-radius: 0; background: #c8c6c4; left: 206px; top: 191px; height: 436px; }

.mark { position: absolute; border: 5px solid #3f48cc; z-index: 5; }
.mark-focus { left: 615px; top: 529px; width: 41px; height: 44px; }
.mark-region { left: 1247px; top: 585px; width: 133px; height: 39px; }
.mark-legend { left: 1006px; top: 721px; width: 219px; height: 91px; }
```
